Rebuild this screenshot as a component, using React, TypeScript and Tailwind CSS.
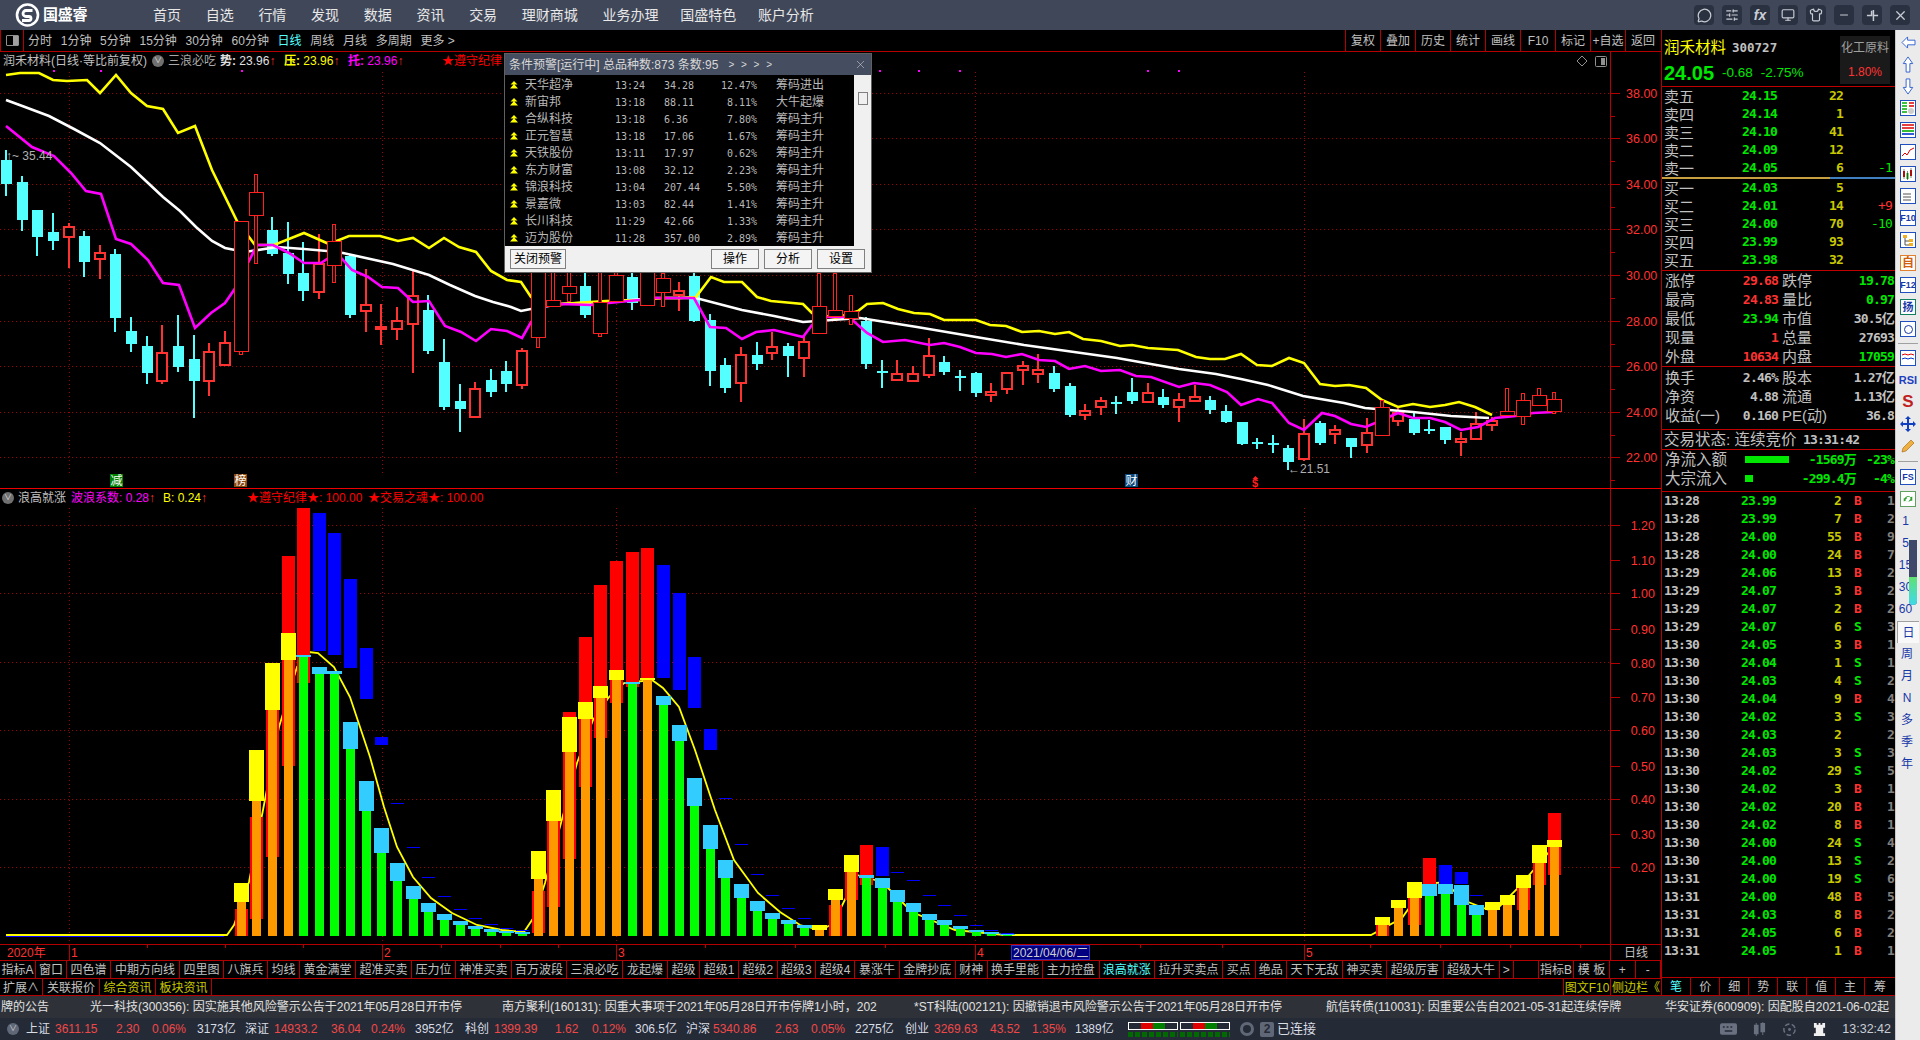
import { MessageCircle, Minus, Monitor, Shirt, SlidersHorizontal, X } from 'lucide-react'

const sans = "[font-family:'Liberation_Sans','Noto_Sans_CJK_SC',sans-serif]"
const mono = "[font-family:'DejaVu_Sans_Mono','Noto_Sans_CJK_SC',monospace]"
const digits = 'font-bold text-[13px] tracking-[-0.8px]'

const barX = (i: number) => Math.round(6 + 15.64 * i)

// wick top, wick bottom, body top, body bottom, type (c solid cyan, r hollow red, b wide thin red)
const candles: [number, number, number, number, string][] = [
    [150, 196, 160, 184, 'c'], [176, 231, 182, 220, 'c'], [210, 256, 210, 237, 'c'], [213, 250, 232, 241, 'c'],
    [223, 268, 227, 237, 'r'], [231, 277, 236, 262, 'c'], [245, 279, 253, 259, 'r'], [249, 332, 254, 318, 'c'],
    [317, 352, 331, 344, 'c'], [336, 384, 346, 373, 'c'], [325, 384, 353, 381, 'r'], [315, 372, 346, 367, 'c'],
    [335, 418, 359, 381, 'c'], [343, 396, 352, 381, 'r'], [331, 365, 343, 365, 'r'], [221, 354, 221, 351, 'b'],
    [174, 263, 192, 215, 'b'], [217, 256, 230, 254, 'c'], [222, 284, 253, 274, 'c'], [242, 301, 273, 291, 'c'],
    [234, 299, 264, 292, 'r'], [224, 282, 241, 265, 'b'], [255, 318, 256, 315, 'c'], [269, 332, 305, 311, 'r'],
    [304, 345, 327, 329, 'r'], [307, 340, 321, 329, 'r'], [271, 373, 296, 324, 'r'], [295, 354, 310, 351, 'c'],
    [339, 410, 362, 407, 'c'], [384, 432, 401, 409, 'c'], [382, 417, 389, 417, 'r'], [369, 397, 380, 392, 'c'],
    [361, 392, 371, 384, 'c'], [348, 389, 351, 385, 'r'], [230, 347, 235, 337, 'b'], [270, 306, 300, 306, 'b'],
    [272, 301, 286, 293, 'b'], [272, 318, 286, 315, 'c'], [272, 336, 302, 333, 'b'], [260, 301, 275, 301, 'b'],
    [270, 310, 277, 303, 'c'], [260, 305, 268, 305, 'b'], [273, 306, 278, 292, 'b'], [282, 311, 291, 295, 'r'],
    [268, 322, 276, 321, 'c'], [314, 386, 320, 371, 'c'], [358, 393, 365, 388, 'c'], [347, 402, 355, 383, 'r'],
    [342, 370, 355, 364, 'c'], [332, 360, 347, 353, 'r'], [343, 377, 346, 356, 'c'], [335, 377, 342, 358, 'r'],
    [273, 333, 306, 333, 'b'], [273, 316, 310, 316, 'b'], [295, 324, 311, 318, 'b'], [317, 369, 321, 364, 'c'],
    [360, 388, 371, 373, 'c'], [360, 380, 374, 380, 'r'], [366, 382, 374, 381, 'r'], [338, 378, 356, 375, 'r'],
    [356, 375, 362, 372, 'c'], [370, 391, 376, 378, 'c'], [372, 397, 373, 393, 'c'], [383, 402, 392, 395, 'r'],
    [373, 394, 373, 389, 'r'], [361, 385, 366, 370, 'r'], [354, 383, 370, 374, 'r'], [366, 392, 373, 389, 'c'],
    [383, 417, 386, 415, 'c'], [404, 420, 411, 415, 'r'], [397, 415, 401, 407, 'r'], [396, 414, 402, 404, 'c'],
    [378, 404, 392, 401, 'c'], [383, 403, 393, 402, 'r'], [389, 408, 397, 405, 'c'], [393, 422, 400, 407, 'r'],
    [385, 402, 397, 401, 'r'], [396, 414, 400, 410, 'c'], [405, 423, 411, 422, 'c'], [422, 445, 422, 444, 'c'],
    [438, 449, 442, 444, 'c'], [435, 453, 443, 445, 'c'], [445, 470, 448, 462, 'c'], [419, 461, 434, 459, 'r'],
    [421, 445, 423, 443, 'c'], [425, 444, 430, 434, 'r'], [438, 458, 438, 447, 'c'], [418, 453, 433, 445, 'r'],
    [400, 435, 407, 435, 'b'], [406, 426, 413, 421, 'r'], [413, 435, 419, 433, 'c'], [420, 434, 429, 431, 'c'],
    [427, 444, 427, 440, 'c'], [432, 456, 439, 442, 'r'], [412, 440, 424, 439, 'r'], [417, 431, 421, 425, 'r'],
    [388, 415, 411, 415, 'b'], [393, 424, 400, 416, 'b'], [388, 405, 395, 405, 'b'], [392, 413, 399, 411, 'b'],
]

const yellowLine = '6,75 20,73 39,73 53,80 67,81 87,80 100,93 116,75 131,93 147,106 163,109 178,133 195,126 212,170 237,221 255,245 274,245 304,233 329,244 349,236 380,236 398,241 413,238 429,248 444,238 459,247 476,252 491,271 507,280 521,282 531,297 546,304 560,304 590,302 606,301 640,300 663,298 680,298 696,297 711,277 724,282 742,282 757,297 771,301 803,304 812,313 836,318 858,311 867,304 883,303 898,309 914,313 930,314 944,320 976,320 990,325 1006,326 1022,332 1039,331 1055,334 1069,332 1083,339 1101,341 1120,346 1132,345 1148,348 1178,350 1196,357 1210,359 1225,359 1241,354 1257,365 1272,366 1289,358 1304,363 1320,384 1335,386 1349,385 1366,388 1382,400 1398,407 1413,404 1430,407 1445,405 1459,402 1475,407 1492,415'
const whiteLine = '6,100 25,107 49,116 74,129 100,143 131,167 147,182 163,197 180,211 196,227 212,241 225,248 245,252 277,247 304,249 327,251 343,253 393,264 429,275 450,285 475,296 493,302 511,307 521,311 531,309 560,304 620,301 655,298 696,298 742,310 774,316 803,322 860,318 917,327 976,337 1024,345 1117,358 1179,369 1216,374 1241,379 1268,385 1303,396 1344,403 1365,408 1413,412 1451,416 1489,418'
const magentaLine = '6,126 32,147 54,156 71,173 86,191 101,194 116,239 131,244 148,260 163,283 179,285 195,328 211,313 225,303 234,290 248,263 257,245 273,245 289,253 304,263 321,263 336,253 343,260 352,270 368,277 382,287 398,288 413,302 429,301 445,326 461,332 476,341 491,329 507,331 522,338 531,322 546,306 560,304 592,305 609,303 639,300 655,298 694,298 710,327 726,328 742,339 756,332 774,330 803,337 812,325 826,317 849,317 867,333 883,342 905,340 930,345 944,343 960,347 976,353 992,354 1006,357 1022,354 1039,360 1055,361 1069,369 1085,366 1101,371 1120,370 1136,376 1151,377 1179,387 1194,383 1210,385 1227,392 1241,405 1258,399 1272,403 1289,423 1304,430 1322,413 1335,416 1351,424 1366,427 1382,420 1398,413 1413,418 1430,418 1445,422 1461,430 1478,427 1495,418 1516,416 1533,413 1554,412'
const lowerLine = '6,935 227,935 234,925 249,882 263,810 279,727 297,667 309,652 318,653 334,667 350,697 370,757 384,807 397,847 413,877 431,898 452,913 477,925 502,930 524,932 534,917 545,883 561,823 577,763 593,720 609,697 624,683 652,680 663,688 679,707 695,750 715,810 734,860 758,893 780,912 800,925 820,930 833,924 857,875 882,882 912,912 955,930 1004,935 1371,935 1402,918 1426,884 1445,882 1463,900 1494,912 1518,888 1555,845'

type Bar = { i: number; top: number; cap: number; hi?: [number, number]; strip?: number; stripTop?: number; mark?: number }
const bars: Bar[] = [
    { i: 15, top: 902, cap: 883, strip: 936, stripTop: 909 },
    { i: 16, top: 801, cap: 750, strip: 919, stripTop: 817 },
    { i: 17, top: 710, cap: 663, strip: 857 },
    { i: 18, top: 660, cap: 633, hi: [556, 633], strip: 766 },
    { i: 19, top: 657, cap: 655, hi: [508, 655], strip: 683 },
    { i: 20, top: 674, cap: 667, hi: [513, 651] },
    { i: 21, top: 674, cap: 671, hi: [533, 655] },
    { i: 22, top: 749, cap: 722, hi: [579, 668] },
    { i: 23, top: 811, cap: 781, hi: [648, 699] },
    { i: 24, top: 853, cap: 828, hi: [737, 745] },
    { i: 25, top: 881, cap: 863, mark: 803 },
    { i: 26, top: 899, cap: 886, mark: 847 },
    { i: 27, top: 912, cap: 903, mark: 877 },
    { i: 28, top: 920, cap: 914, mark: 896 },
    { i: 29, top: 925, cap: 921, mark: 909 },
    { i: 30, top: 929, cap: 926, mark: 918 },
    { i: 31, top: 932, cap: 929, mark: 924 },
    { i: 32, top: 933, cap: 931, mark: 928 },
    { i: 33, top: 934, cap: 932, mark: 930 },
    { i: 34, top: 879, cap: 851, strip: 933, stripTop: 891 },
    { i: 35, top: 821, cap: 790, strip: 907 },
    { i: 36, top: 752, cap: 717, hi: [712, 717], strip: 859 },
    { i: 37, top: 719, cap: 702, hi: [637, 702], strip: 787 },
    { i: 38, top: 698, cap: 686, hi: [585, 686], strip: 738 },
    { i: 39, top: 680, cap: 670, hi: [561, 670], strip: 703 },
    { i: 40, top: 684, cap: 682, hi: [552, 682], strip: 687 },
    { i: 41, top: 680, cap: 678, hi: [548, 678] },
    { i: 42, top: 705, cap: 696, hi: [565, 678] },
    { i: 43, top: 741, cap: 725, hi: [593, 690] },
    { i: 44, top: 806, cap: 778, hi: [657, 708] },
    { i: 45, top: 849, cap: 825, hi: [729, 750] },
    { i: 46, top: 878, cap: 860, mark: 798 },
    { i: 47, top: 898, cap: 884, mark: 844 },
    { i: 48, top: 911, cap: 901, mark: 874 },
    { i: 49, top: 919, cap: 913, mark: 895 },
    { i: 50, top: 924, cap: 920, mark: 908 },
    { i: 51, top: 928, cap: 925, mark: 918 },
    { i: 52, top: 930, cap: 925 },
    { i: 53, top: 900, cap: 889, strip: 936, stripTop: 905 },
    { i: 54, top: 872, cap: 855, strip: 900 },
    { i: 55, top: 878, cap: 875, hi: [845, 875], strip: 885 },
    { i: 56, top: 888, cap: 878, hi: [847, 876] },
    { i: 57, top: 902, cap: 890, mark: 872 },
    { i: 58, top: 912, cap: 903, mark: 880 },
    { i: 59, top: 920, cap: 914, mark: 895 },
    { i: 60, top: 925, cap: 920, mark: 905 },
    { i: 61, top: 929, cap: 926, mark: 915 },
    { i: 62, top: 932, cap: 930, mark: 925 },
    { i: 63, top: 934, cap: 932, mark: 930 },
    { i: 64, top: 935, cap: 934, mark: 933 },
    { i: 88, top: 925, cap: 917, strip: 936 },
    { i: 89, top: 908, cap: 900 },
    { i: 90, top: 898, cap: 882, strip: 925 },
    { i: 91, top: 896, cap: 884, hi: [858, 884] },
    { i: 92, top: 894, cap: 884, hi: [865, 884] },
    { i: 93, top: 905, cap: 885, hi: [872, 884] },
    { i: 94, top: 915, cap: 905, mark: 895 },
    { i: 95, top: 910, cap: 902 },
    { i: 96, top: 905, cap: 895 },
    { i: 97, top: 888, cap: 875, strip: 910 },
    { i: 98, top: 863, cap: 845, strip: 885 },
    { i: 99, top: 847, cap: 840, hi: [813, 840], strip: 875 },
]
const greenBars = [19, 20, 21, 22, 23, 24, 25, 26, 27, 28, 29, 30, 31, 32, 33, 40, 42, 43, 44, 45, 46, 47, 48, 49, 50, 51, 55, 56, 57, 58, 59, 60, 61, 62, 63, 64, 91, 92, 93, 94]
const blueTop = [20, 21, 22, 23, 24, 42, 43, 44, 45, 56, 92, 93]

const gridXs = [69, 382, 616, 975, 1304]
const mainPrices = ['38.00', '36.00', '34.00', '32.00', '30.00', '28.00', '26.00', '24.00', '22.00']
const lowerPrices: [string, number][] = [
    ['1.20', 525], ['1.10', 560], ['1.00', 593], ['0.90', 629], ['0.80', 663], ['0.70', 697],
    ['0.60', 730], ['0.50', 766], ['0.40', 799], ['0.30', 834], ['0.20', 867],
]

const navItems = ['首页', '自选', '行情', '发现', '数据', '资讯', '交易', '理财商城', '业务办理', '国盛特色', '账户分析']
const periods = ['1分钟', '5分钟', '15分钟', '30分钟', '60分钟']
const tools = ['复权', '叠加', '历史', '统计', '画线', 'F10', '标记', '+自选', '返回']

const tabs1: [string, string, string?][] = [
    ['指标A', 'w-[36px]'], ['窗口', 'w-[31px]'], ['四色谱', 'w-[44px]'], ['中期方向线', 'w-[69px]'], ['四里图', 'w-[44px]'],
    ['八旗兵', 'w-[44px]'], ['均线', 'w-[32px]'], ['黄金满堂', 'w-[56px]'], ['超准买卖', 'w-[56px]'], ['压力位', 'w-[44px]'],
    ['神准买卖', 'w-[56px]'], ['百万波段', 'w-[55px]'], ['三浪必吃', 'w-[56px]'], ['龙起爆', 'w-[45px]'], ['超级', 'w-[32px]'],
    ['超级1', 'w-[39px]'], ['超级2', 'w-[38.5px]'], ['超级3', 'w-[38.5px]'], ['超级4', 'w-[39px]'], ['暴涨牛', 'w-[45px]'],
    ['金牌抄底', 'w-[55.5px]'], ['财神', 'w-[32.5px]'], ['换手里能', 'w-[55px]'], ['主力控盘', 'w-[56.5px]'],
    ['浪高就涨', 'w-[55.5px]', 'text-[#54ffff]'], ['拉升买卖点', 'w-[68px]'], ['买点', 'w-[32.5px]'], ['绝品', 'w-[31.5px]'],
    ['天下无敌', 'w-[56px]'], ['神买卖', 'w-[44px]'], ['超级厉害', 'w-[56.5px]'], ['超级大牛', 'w-[56px]'], ['>', 'w-[14.5px]'],
    ['', 'w-[25px]'], ['指标B', 'w-[35px]'], ['模 板', 'w-[36px]'], ['+', 'w-[25.5px]'], ['-', 'w-[25.5px]'],
]
const tabs2: [string, string, string?][] = [
    ['扩展∧', 'w-[43px]'], ['关联报价', 'w-[57px]'], ['综合资讯', 'w-[56px]', 'text-[#c8c800]'], ['板块资讯', 'w-[56px]', 'text-[#c8c800]'],
]

const askRows = [['卖五', '24.15', '22', ''], ['卖四', '24.14', '1', ''], ['卖三', '24.10', '41', ''], ['卖二', '24.09', '12', ''], ['卖一', '24.05', '6', '-1']]
const bidRows = [['买一', '24.03', '5', ''], ['买二', '24.01', '14', '+9'], ['买三', '24.00', '70', '-10'], ['买四', '23.99', '93', ''], ['买五', '23.98', '32', '']]

const G = 'text-[#00e800]'
const R = 'text-[#ff3232]'
const W = 'text-[#c0c0c0]'
const stats1 = [
    ['涨停', '29.68', R, '跌停', '19.78', G], ['最高', '24.83', R, '量比', '0.97', G], ['最低', '23.94', G, '市值', '30.5亿', W],
    ['现量', '1', R, '总量', '27693', W], ['外盘', '10634', R, '内盘', '17059', G],
]
const stats2 = [['换手', '2.46%', W, '股本', '1.27亿', W], ['净资', '4.88', W, '流通', '1.13亿', W], ['收益(一)', '0.160', W, 'PE(动)', '36.8', W]]

const trades = [
    ['13:28', '23.99', '2', 'B', '1'], ['13:28', '23.99', '7', 'B', '2'], ['13:28', '24.00', '55', 'B', '9'], ['13:28', '24.00', '24', 'B', '7'],
    ['13:29', '24.06', '13', 'B', '2'], ['13:29', '24.07', '3', 'B', '2'], ['13:29', '24.07', '2', 'B', '2'], ['13:29', '24.07', '6', 'S', '3'],
    ['13:30', '24.05', '3', 'B', '1'], ['13:30', '24.04', '1', 'S', '1'], ['13:30', '24.03', '4', 'S', '2'], ['13:30', '24.04', '9', 'B', '4'],
    ['13:30', '24.02', '3', 'S', '3'], ['13:30', '24.03', '2', '', '2'], ['13:30', '24.03', '3', 'S', '3'], ['13:30', '24.02', '29', 'S', '5'],
    ['13:30', '24.02', '3', 'B', '1'], ['13:30', '24.02', '20', 'B', '1'], ['13:30', '24.02', '8', 'B', '1'], ['13:30', '24.00', '24', 'S', '4'],
    ['13:30', '24.00', '13', 'S', '2'], ['13:31', '24.00', '19', 'S', '6'], ['13:31', '24.00', '48', 'B', '5'], ['13:31', '24.03', '8', 'B', '2'],
    ['13:31', '24.05', '6', 'B', '2'], ['13:31', '24.05', '1', 'B', '1'],
]

const panelTabs: [string, string][] = [['笔', 'w-[28px]'], ['价', 'w-[29.5px]'], ['细', 'w-[29px]'], ['势', 'w-[29px]'], ['联', 'w-[29px]'], ['值', 'w-[29px]'], ['主', 'w-[29px]'], ['筹', 'w-[31px]']]

const alerts = [
    ['天华超净', '13:24', '34.28', '12.47%', '筹码进出'], ['新宙邦', '13:18', '88.11', '8.11%', '大牛起爆'], ['合纵科技', '13:18', '6.36', '7.80%', '筹码主升'],
    ['正元智慧', '13:18', '17.06', '1.67%', '筹码主升'], ['天铁股份', '13:11', '17.97', '0.62%', '筹码主升'], ['东方财富', '13:08', '32.12', '2.23%', '筹码主升'],
    ['锦浪科技', '13:04', '207.44', '5.50%', '筹码主升'], ['景嘉微', '13:03', '82.44', '1.41%', '筹码主升'], ['长川科技', '11:29', '42.66', '1.33%', '筹码主升'],
    ['迈为股份', '11:28', '357.00', '2.89%', '筹码主升'],
]

const tickers: [string, string][] = [
    ['牌的公告', 'w-[89px]'],
    ['光一科技(300356): 因实施其他风险警示公告于2021年05月28日开市停', 'w-[412px]'],
    ['南方聚利(160131): 因重大事项于2021年05月28日开市停牌1小时，202', 'w-[412px]'],
    ['*ST科陆(002121): 因撤销退市风险警示公告于2021年05月28日开市停', 'w-[412px]'],
    ['航信转债(110031): 因重要公告自2021-05-31起连续停牌', 'w-[339px]'],
    ['华安证券(600909): 因配股自2021-06-02起', 'w-[231px]'],
]

const W2 = 'text-[#d8dce4]'
const R2 = 'text-[#f04848]'
const indexCells: [string, string, string][] = [
    ['上证', W2, 'w-[29px]'], ['3611.15', R2, 'w-[61px]'], ['2.30', R2, 'w-[36px]'], ['0.06%', R2, 'w-[45px]'], ['3173亿', W2, 'w-[48px]'],
    ['深证', W2, 'w-[29px]'], ['14933.2', R2, 'w-[57px]'], ['36.04', R2, 'w-[40px]'], ['0.24%', R2, 'w-[44px]'], ['3952亿', W2, 'w-[50px]'],
    ['科创', W2, 'w-[29px]'], ['1399.39', R2, 'w-[61px]'], ['1.62', R2, 'w-[37px]'], ['0.12%', R2, 'w-[43px]'], ['306.5亿', W2, 'w-[51px]'],
    ['沪深', W2, 'w-[27px]'], ['5340.86', R2, 'w-[62px]'], ['2.63', R2, 'w-[36px]'], ['0.05%', R2, 'w-[44px]'], ['2275亿', W2, 'w-[50px]'],
    ['创业', W2, 'w-[29px]'], ['3269.63', R2, 'w-[56px]'], ['43.52', R2, 'w-[42px]'], ['1.35%', R2, 'w-[43px]'], ['1389亿', W2, 'w-[53px]'],
]

function MainChart() {
    return (
        <svg viewBox="0 52 1661 436" className={`block w-[1661px] h-[436px] ${sans}`}>
            {mainPrices.map((p, k) => {
                const y = Math.round(92.5 + k * 45.6) + 0.5
                return (
                    <g key={p}>
                        <line x1={0} x2={1610} y1={y} y2={y} stroke="#a00000" strokeDasharray="1 3" />
                        <line x1={1610} x2={1620} y1={y} y2={y} stroke="#b40000" />
                        <line x1={1610} x2={1615} y1={y + 23} y2={y + 23} stroke="#b40000" />
                        <text x={1626} y={y + 4.5} fill="#ff3232" fontSize={12.5}>{p}</text>
                    </g>
                )
            })}
            {gridXs.map((x) => (
                <line key={x} x1={x + 0.5} x2={x + 0.5} y1={72} y2={473} stroke="#a00000" strokeDasharray="1 3" />
            ))}
            <line x1={1610.5} x2={1610.5} y1={52} y2={488} stroke="#b40000" />

            <g shapeRendering="crispEdges">
                {candles.map(([wt, wb, bt, bb, type], i) => {
                    const x = barX(i)
                    if (type === 'c') {
                        return (
                            <g key={i} fill="#54ffff">
                                <rect x={x - 1} y={wt} width={2} height={wb - wt} />
                                <rect x={x - 5} y={bt} width={11} height={bb - bt} />
                            </g>
                        )
                    }
                    if (type === 'r') {
                        return (
                            <g key={i}>
                                <rect x={x - 1} y={wt} width={2} height={wb - wt} fill="#ff3232" />
                                <rect x={x - 5} y={bt} width={10} height={bb - bt} fill="#000" stroke="#ff3232" strokeWidth={2} />
                            </g>
                        )
                    }
                    return null
                })}
            </g>
            <polyline points={whiteLine} fill="none" stroke="#fff" strokeWidth={2.6} />
            <polyline points={yellowLine} fill="none" stroke="#ff0" strokeWidth={2.6} />
            <polyline points={magentaLine} fill="none" stroke="#f0f" strokeWidth={2.6} />
            <g shapeRendering="crispEdges">
                {candles.map(([wt, wb, bt, bb, type], i) => {
                    if (type !== 'b') return null
                    const x = barX(i)
                    return (
                        <g key={i} fill="#000" stroke="#ff2020">
                            <rect x={x - 1.5} y={wt} width={3} height={wb - wt} />
                            <rect x={x - 7} y={bt} width={14} height={bb - bt} />
                        </g>
                    )
                })}
            </g>

            {[53, 100, 241, 860, 879, 918, 959, 1147, 1178].map((x) => (
                <rect key={x} x={x} y={70} width={2} height={2} fill="#f0f" />
            ))}
            <text x={6} y={160} fill="#b0b0b0" fontSize={12}>↑~ 35.44</text>
            <text x={1288} y={473} fill="#b0b0b0" fontSize={12}>←21.51</text>

            <rect x={110} y={474} width={13} height={13} fill="#008000" />
            <text x={110.5} y={485} fill="#fff" fontSize={12}>减</text>
            <rect x={234} y={474} width={13} height={13} fill="#8a4a10" />
            <text x={234.5} y={485} fill="#fff" fontSize={12}>榜</text>
            <rect x={1125} y={474} width={13} height={13} fill="#0a4a80" />
            <text x={1125.5} y={485} fill="#fff" fontSize={12}>财</text>
            <text x={1252} y={487} fill="#ff2020" fontSize={11} fontWeight={700}>$</text>
            <path d="M1255.5 476l3 3h-6z" fill="#ff2020" />

            <path d="M1582 56l5 5-5 5-5-5z" fill="none" stroke="#909090" />
            <rect x={1595.5} y={56.5} width={11} height={10} rx={1} fill="none" stroke="#909090" />
            <rect x={1601} y={58} width={4} height={7} fill="#909090" />
        </svg>
    )
}

function LowerChart() {
    return (
        <svg viewBox="0 489 1661 455" className={`block w-[1661px] h-[455px] ${sans}`}>
            {[525, 593, 662, 730, 799, 867].map((y) => (
                <line key={y} x1={0} x2={1610} y1={y + 0.5} y2={y + 0.5} stroke="#a00000" strokeDasharray="1 3" />
            ))}
            {gridXs.map((x) => (
                <line key={x} x1={x + 0.5} x2={x + 0.5} y1={508} y2={944} stroke="#a00000" strokeDasharray="1 3" />
            ))}
            <line x1={1610.5} x2={1610.5} y1={489} y2={944} stroke="#b40000" />
            {lowerPrices.map(([p, y]) => (
                <g key={p}>
                    <line x1={1610} x2={1620} y1={y + 0.5} y2={y + 0.5} stroke="#b40000" />
                    <text x={1655} y={y + 4.5} fill="#ff3232" fontSize={12.5} textAnchor="end">{p}</text>
                </g>
            ))}
            <polyline points={lowerLine} fill="none" stroke="#ff0" strokeWidth={1.8} />
            <g shapeRendering="crispEdges">
                {bars.map((b) => {
                    const x = barX(b.i)
                    const green = greenBars.includes(b.i)
                    const blue = blueTop.includes(b.i)
                    return (
                        <g key={b.i}>
                            {b.strip && <rect x={x - 6} y={b.stripTop ?? b.top} width={13} height={b.strip - (b.stripTop ?? b.top)} fill="#f00" />}
                            <rect x={x - 4} y={b.top} width={9} height={936 - b.top} fill={green ? '#0f0' : '#f90'} />
                            <rect x={x - 7} y={b.cap} width={15} height={b.top - b.cap} fill={green ? '#3cf' : '#ff0'} />
                            {b.hi && <rect x={x - 6} y={b.hi[0]} width={13} height={b.hi[1] - b.hi[0]} fill={blue ? '#00f' : '#f00'} />}
                            {b.mark && <rect x={x - 6} y={b.mark} width={13} height={1} fill="#00f" />}
                        </g>
                    )
                })}
            </g>
            <line x1={6} x2={224} y1={936.5} y2={936.5} stroke="#00f" strokeWidth={1} />
        </svg>
    )
}

function TimeAxis() {
    const short = [147, 225, 303, 441, 500, 558, 705, 795, 885, 1055, 1140, 1222, 1370, 1440, 1510, 1580]
    return (
        <svg viewBox="0 0 1610 15" className={`block w-[1610px] h-[15px] ${sans}`}>
            {short.map((x) => <line key={x} x1={x + 0.5} x2={x + 0.5} y1={0} y2={3} stroke="#b40000" />)}
            {gridXs.map((x) => <line key={x} x1={x + 0.5} x2={x + 0.5} y1={0} y2={15} stroke="#b40000" />)}
            <text x={7} y={12} fill="#ff3232" fontSize={12}>2020年</text>
            {gridXs.map((x, i) => <text key={x} x={x + 2} y={12} fill="#ff3232" fontSize={12}>{i + 1}</text>)}
            <rect x={1011.5} y={0.5} width={78} height={14} fill="#000080" stroke="#3030c0" />
            <text x={1013} y={12} fill="#d0d0d0" fontSize={12}>2021/04/06/二</text>
        </svg>
    )
}

function Logo() {
    return (
        <div className="flex items-center gap-[3px] pl-[15px] w-[153px] shrink-0">
            <svg viewBox="0 0 24 24" className="w-[25px] h-[24px]">
                <circle cx="12" cy="12" r="10.5" fill="none" stroke="#fff" strokeWidth="2.6" />
                <path d="M17 7.5H10.5a3 3 0 0 0 0 6h3a2 2 0 0 1 0 4H6.5" fill="none" stroke="#fff" strokeWidth="2.8" />
            </svg>
            <span className="text-[15px] font-bold text-white tracking-[-0.3px]">国盛睿</span>
        </div>
    )
}

function WinButton({ children }: { children: React.ReactNode }) {
    return <div className="w-[20px] h-[20px] flex items-center justify-center rounded-[4px] bg-[#2a3140] text-[#c8ccd4]">{children}</div>
}

function TopBar() {
    return (
        <div className="h-[30px] flex items-center bg-[#3f4759] shrink-0">
            <Logo />
            <div className="flex gap-[24.7px] text-[14px] text-[#e8e8e8]">
                {navItems.map((n, i) => <span key={n} className={i > 8 ? '-ml-[3px]' : ''}>{n}</span>)}
            </div>
            <div className="ml-auto mr-[10px] flex gap-[8px]">
                <WinButton><MessageCircle size={15} /></WinButton>
                <WinButton><SlidersHorizontal size={14} /></WinButton>
                <WinButton><span className="text-[14px] font-bold italic leading-none">fx</span></WinButton>
                <WinButton><Monitor size={14} /></WinButton>
                <WinButton><Shirt size={14} /></WinButton>
                <WinButton><Minus size={12} /></WinButton>
                <WinButton>
                    <svg viewBox="0 0 14 14" className="w-[13px] h-[13px]"><path d="M1 7h5V2M8 1v12M8 7h5" fill="none" stroke="currentColor" strokeWidth="1.6" /></svg>
                </WinButton>
                <WinButton><X size={15} /></WinButton>
            </div>
        </div>
    )
}

function Toolbar() {
    return (
        <div className="h-[22px] shrink-0 flex items-center border-b border-[#b40000] text-[12px] text-[#c0c0c0]">
            <div className="w-[24px] h-full border-x border-[#b40000] flex items-center justify-center shrink-0">
                <div className="w-[13px] h-[11px] border border-[#909090] rounded-[1px] flex justify-end"><div className="w-[5px] bg-[#a0a0a0]" /></div>
            </div>
            <div className="flex gap-[8.7px] pl-[4px] items-center">
                <span>分时</span>
                {periods.map((p) => <span key={p}>{p}</span>)}
                <span className="text-[#54ffff]">日线</span>
                <span>周线</span>
                <span>月线</span>
                <span>多周期</span>
                <span>更多 &gt;</span>
            </div>
            <div className="ml-auto flex h-full pr-[1px]">
                {tools.map((t) => (
                    <div key={t} className="w-[35px] h-full border-l border-[#b40000] flex items-center justify-center">{t}</div>
                ))}
            </div>
        </div>
    )
}

function ChartHeader() {
    return (
        <div className="absolute left-0 top-0 h-[18px] flex items-center text-[12px] whitespace-nowrap text-[#c0c0c0]">
            <span className="ml-[3px] w-[149px]">润禾材料(日线·等比前复权)</span>
            <span className="w-[12px] h-[12px] rounded-full bg-[#707070] text-[8px] flex items-center justify-center text-[#ddd] leading-none">∨</span>
            <span className="ml-[4px] w-[52px] text-[#a8a8a8]">三浪必吃</span>
            <span className="font-bold text-[#e0e0e0] w-[64px]">势: <span className="font-normal">23.96</span><span className="text-[#ff3232]">↑</span></span>
            <span className="text-[#ffff00] w-[64px]"><b>压:</b> 23.96<span className="text-[#ff3232]">↑</span></span>
            <span className="text-[#ff00ff] w-[94px]"><b>托:</b> 23.96<span className="text-[#ff3232]">↑</span></span>
            <span className="text-[#ff0000]">★遵守纪律</span>
        </div>
    )
}

function LowerHeader() {
    return (
        <div className="absolute left-0 top-0 h-[17px] flex items-center text-[12px] whitespace-nowrap">
            <span className="ml-[2px] w-[12px] h-[12px] rounded-full bg-[#707070] text-[8px] flex items-center justify-center text-[#ddd] leading-none">∨</span>
            <span className="ml-[4px] w-[53px] text-[#c0c0c0]">浪高就涨</span>
            <span className="w-[92px] text-[#ff00ff]">波浪系数: 0.28<span className="text-[#ff3232]">↑</span></span>
            <span className="w-[84px] text-[#ffff00]">B: 0.24<span className="text-[#ff3232]">↑</span></span>
            <span className="w-[121px] text-[#ff0000]">★遵守纪律★: 100.00</span>
            <span className="text-[#ff0000]">★交易之魂★: 100.00</span>
        </div>
    )
}

function AlertPopup() {
    return (
        <div className="absolute left-[504px] top-[1px] w-[368px] h-[220px] flex flex-col bg-[#f0f0f0] border border-[#606060] text-[12px]">
            <div className="h-[21px] shrink-0 flex items-center bg-[#454e60] text-[#d8d8d8] pl-[4px] whitespace-pre">
                <span>条件预警[运行中] 总品种数:873 条数:95</span>
                <span className="ml-[10px] tracking-[2px] text-[10px]">&gt; &gt; &gt; &gt;</span>
                <X size={13} strokeWidth={1} className="ml-auto mr-[4px]" />
            </div>
            <div className="h-[171px] flex">
                <div className="w-[349px] pt-[1.5px] bg-black overflow-hidden">
                    {alerts.map(([name, time, price, pct, label]) => (
                        <div key={name} className="h-[17px] flex items-center text-[#b8b8b8]">
                            <svg viewBox="0 0 8 8" className="ml-[5px] w-[8px] h-[8px] shrink-0"><path d="M4 0l3.5 3.5h-7zM4 3l4 4.5H0z" fill="#ff0" /></svg>
                            <span className="ml-[7px] w-[90px]">{name}</span>
                            <span className={`${mono} text-[10px] w-[49px]`}>{time}</span>
                            <span className={`${mono} text-[10px] w-[53px]`}>{price}</span>
                            <span className={`${mono} text-[10px] w-[40px] text-right`}>{pct}</span>
                            <span className="ml-[19px]">{label}</span>
                        </div>
                    ))}
                </div>
                <div className="flex-1 pt-[17px] flex justify-center">
                    <div className="w-[10px] h-[13px] border border-[#808080]" />
                </div>
            </div>
            <div className="flex-1 flex items-center pl-[5px] gap-[5px] text-black">
                <div className="w-[56px] h-[20px] border border-[#808080] bg-[#f4f4f4] flex items-center justify-center mr-[140px]">关闭预警</div>
                <div className="w-[48px] h-[20px] border border-[#808080] bg-[#f4f4f4] flex items-center justify-center">操作</div>
                <div className="w-[48px] h-[20px] border border-[#808080] bg-[#f4f4f4] flex items-center justify-center">分析</div>
                <div className="w-[48px] h-[20px] border border-[#808080] bg-[#f4f4f4] flex items-center justify-center">设置</div>
            </div>
        </div>
    )
}

function TabRow({ items, children }: { items: [string, string, string?][]; children?: React.ReactNode }) {
    return (
        <div className="h-[18px] shrink-0 flex border-t border-[#b40000] text-[12px] text-[#c0c0c0] whitespace-nowrap">
            {items.map(([t, w, c], i) => (
                <div key={i} className={`${w} ${c ?? ''} shrink-0 h-full border-r border-[#b40000] flex items-center justify-center overflow-hidden`}>{t}</div>
            ))}
            {children}
        </div>
    )
}

function LeftColumn() {
    return (
        <div className="w-[1662px] shrink-0 flex flex-col border-r border-[#b40000]">
            <Toolbar />
            <div className="relative h-[437px] shrink-0 border-b border-[#ee0000]">
                <MainChart />
                <ChartHeader />
                <AlertPopup />
            </div>
            <div className="relative h-[455px] shrink-0">
                <LowerChart />
                <LowerHeader />
            </div>
            <div className="h-[15px] shrink-0 flex border-t border-[#b40000] box-content">
                <TimeAxis />
                <div className="flex-1 border-l border-[#b40000] -mb-[1px] flex items-center justify-center text-[12px] text-[#c0c0c0]">日线</div>
            </div>
            <TabRow items={tabs1} />
            <TabRow items={tabs2}>
                <div className="ml-auto w-[47px] border-l border-[#b40000] text-[#c8c800] flex items-center justify-center">图文F10</div>
                <div className="w-[51px] border-l border-[#b40000] text-[#c8c800] flex items-center justify-center">侧边栏《</div>
            </TabRow>
        </div>
    )
}

function QuoteRow({ row }: { row: string[] }) {
    return (
        <div className="h-[18px] flex items-center pl-[2px]">
            <span className="w-[78px] text-[15px] text-[#c0c0c0] leading-none">{row[0]}</span>
            <span className={`w-[60px] ${mono} ${digits} ${G}`}>{row[1]}</span>
            <span className={`w-[41px] text-right ${mono} ${digits} text-[#c8c800]`}>{row[2]}</span>
            <span className={`flex-1 text-right pr-[3px] ${mono} text-[13px] tracking-[-0.8px] ${row[3].startsWith('+') ? R : G}`}>{row[3]}</span>
        </div>
    )
}

function StatRow({ row }: { row: string[] }) {
    return (
        <div className="h-[19px] flex items-center pl-[3px] pr-[1px] text-[#c0c0c0]">
            <span className="text-[15px] leading-none w-[65px] whitespace-nowrap">{row[0]}</span>
            <span className={`w-[48px] text-right ${mono} ${digits} whitespace-nowrap ${row[2]}`}>{row[1]}</span>
            <span className="ml-[4px] text-[15px] leading-none w-[60px] whitespace-nowrap">{row[3]}</span>
            <span className={`flex-1 text-right ${mono} ${digits} whitespace-nowrap ${row[5]}`}>{row[4]}</span>
        </div>
    )
}

function FlowRow({ label, barClass, amount, pct }: { label: string; barClass: string; amount: string; pct: string }) {
    return (
        <div className="h-[19px] flex items-center pl-[3px] pr-[1px]">
            <span className="w-[80px] text-[15.5px] leading-none text-[#c0c0c0]">{label}</span>
            <div className="w-[44px]"><div className={`h-[7px] bg-[#00e800] ${barClass}`} /></div>
            <span className={`w-[67px] text-right ${mono} ${digits} ${G} whitespace-nowrap`}>{amount}</span>
            <span className={`flex-1 text-right ${mono} ${digits} ${G}`}>{pct}</span>
        </div>
    )
}

function RightPanel() {
    return (
        <div className="w-[233px] shrink-0 flex flex-col">
            <div className="h-[57px] shrink-0 border-b border-[#c00000] flex">
                <div className="w-[178px] pl-[2px]">
                    <div className="h-[29px] flex items-end gap-[6px]">
                        <span className="text-[15.5px] text-[#ffff00] leading-[22px]">润禾材料</span>
                        <span className={`${mono} font-bold text-[12.5px] text-[#c0c0c0] leading-[22px]`}>300727</span>
                    </div>
                    <div className={`flex items-center gap-[8px] h-[28px] ${G} ${sans} font-bold`}>
                        <span className="text-[20px] w-[50px]">24.05</span>
                        <span className="text-[13.5px] font-normal">-0.68</span>
                        <span className="text-[13.5px] font-normal">-2.75%</span>
                    </div>
                </div>
                <div className="mt-[6px] w-[50px] h-[48px] bg-[#1a1a1a] flex flex-col items-center">
                    <span className="text-[12px] text-[#a0a0a0] leading-[24px]">化工原料</span>
                    <span className={`text-[12px] ${R} leading-[24px] ${sans}`}>1.80%</span>
                </div>
            </div>
            {askRows.map((r) => <QuoteRow key={r[0]} row={r} />)}
            <div className="h-[2px] shrink-0 flex"><div className="w-[168px] bg-[#c8a040]" /><div className="flex-1 bg-[#4080c0]" /></div>
            {bidRows.map((r) => <QuoteRow key={r[0]} row={r} />)}
            <div className="h-[1px] mt-[1px] shrink-0 bg-[#c00000]" />
            {stats1.map((r) => <StatRow key={r[0]} row={r} />)}
            <div className="h-[1px] shrink-0 mb-[1px] bg-[#c00000]" />
            {stats2.map((r) => <StatRow key={r[0]} row={r} />)}
            <div className="h-[1px] mt-[4px] shrink-0 bg-[#c00000]" />
            <div className="h-[19px] shrink-0 flex items-center pl-[2px] text-[#c0c0c0] whitespace-nowrap">
                <span className="text-[15.5px] leading-none w-[139px]">交易状态: 连续竞价</span>
                <span className={`${mono} ${digits}`}>13:31:42</span>
            </div>
            <div className="h-[1px] shrink-0 bg-[#c00000]" />
            <FlowRow label="净流入额" barClass="w-[44px]" amount="-1569万" pct="-23%" />
            <FlowRow label="大宗流入" barClass="w-[8px]" amount="-299.4万" pct="-4%" />
            <div className="h-[1px] mt-[3px] shrink-0 bg-[#c00000]" />
            <div className="flex-1">
                {trades.map((t, i) => (
                    <div key={i} className={`h-[18px] flex items-center pl-[2px] ${mono} ${digits}`}>
                        <span className="w-[77px] text-[#c0c0c0]">{t[0]}</span>
                        <span className={`w-[50px] ${G}`}>{t[1]}</span>
                        <span className="w-[50px] text-right text-[#c8c800]">{t[2]}</span>
                        <span className={`w-[36px] pl-[13px] ${t[3] === 'B' ? R : G}`}>{t[3]}</span>
                        <span className="flex-1 text-right pr-[1px] text-[#808080]">{t[4]}</span>
                    </div>
                ))}
            </div>
            <div className="h-[18px] shrink-0 flex border-t border-[#b40000] text-[12px] text-[#c0c0c0]">
                {panelTabs.map(([t, w], i) => (
                    <div key={t} className={`${w} h-full flex items-center justify-center ${i === 0 ? 'text-[#54ffff]' : 'border-l border-[#b40000]'}`}>{t}</div>
                ))}
            </div>
        </div>
    )
}

function BoxIcon({ children, border = 'border-[#2050c0]', text = 'text-[#1838a8]' }: { children?: React.ReactNode; border?: string; text?: string }) {
    return <div className={`w-[16px] h-[16px] border ${border} ${text} bg-white flex items-center justify-center text-[9px] font-bold leading-none overflow-hidden`}>{children}</div>
}

function SideStrip() {
    const slot = 'h-[22px] flex items-center justify-center shrink-0'
    return (
        <div className={`relative w-[25px] shrink-0 bg-[#ebebeb] border-l border-[#c8c8c8] flex flex-col items-center pt-[1px] text-[#1838a8] ${sans}`}>
            <div className={slot}><svg viewBox="0 0 16 14" className="w-[15px] h-[13px]"><path d="M1 7l6-6v3.5h8v5H7V13z" fill="#fff" stroke="#3060d0" /></svg></div>
            <div className={slot}><svg viewBox="0 0 12 18" className="w-[12px] h-[17px]"><path d="M6 1l5 7H8v9H4V8H1z" fill="#fff" stroke="#3060d0" /></svg></div>
            <div className={slot}><svg viewBox="0 0 12 18" className="w-[12px] h-[17px]"><path d="M6 17l5-7H8V1H4v9H1z" fill="#fff" stroke="#3060d0" /></svg></div>
            <div className={slot}>
                <BoxIcon>
                    <svg viewBox="0 0 14 14" className="w-[14px] h-[14px]"><path d="M1 2h5M1 5h5M1 8h5M1 11h5" stroke="#0a0" strokeWidth="1.6" /><path d="M8 2h5M8 5h5" stroke="#d00" strokeWidth="1.6" /><circle cx="10" cy="10" r="3" fill="#ccc" /></svg>
                </BoxIcon>
            </div>
            <div className={slot}>
                <BoxIcon>
                    <svg viewBox="0 0 14 14" className="w-[14px] h-[14px]"><path d="M1 2h12M1 5h12" stroke="#d00" strokeWidth="1.6" /><path d="M1 8h12" stroke="#0a0" strokeWidth="1.6" /><path d="M1 11h12" stroke="#03c" strokeWidth="1.6" /></svg>
                </BoxIcon>
            </div>
            <div className={slot}>
                <BoxIcon><svg viewBox="0 0 14 14" className="w-[14px] h-[14px]"><path d="M1 11l3-3 2 2 3-5 4-2" fill="none" stroke="#d00" /></svg></BoxIcon>
            </div>
            <div className={slot}>
                <BoxIcon>
                    <svg viewBox="0 0 14 14" className="w-[14px] h-[14px]"><path d="M2 4h2v6H2zM9 3h2v6H9z" fill="#d00" /><path d="M5.5 6h2v6h-2z" fill="#0a0" /><path d="M3 2v10M6.5 4v9M10 1v10" stroke="#333" strokeWidth=".6" /></svg>
                </BoxIcon>
            </div>
            <div className={slot}><BoxIcon><svg viewBox="0 0 14 14" className="w-[14px] h-[14px]"><path d="M2 5h8M2 8h8M2 11h8" stroke="#555" /></svg></BoxIcon></div>
            <div className={slot}><BoxIcon>F10</BoxIcon></div>
            <div className={slot}><BoxIcon><svg viewBox="0 0 14 14" className="w-[14px] h-[14px]"><path d="M2 2h4v3H2zM8 6h4v3H8zM8 10h4v3H8z" fill="#f0b020" /><path d="M4 5v7h4M4 8h4" fill="none" stroke="#555" /></svg></BoxIcon></div>
            <div className="h-[23px] flex items-center justify-center shrink-0"><BoxIcon border="border-[#e08030]" text="text-[#d06010]"><span className="text-[12px]">自</span></BoxIcon></div>
            <div className={slot}><BoxIcon>F12</BoxIcon></div>
            <div className={slot}><BoxIcon border="border-[#108060]" text="text-[#1838a8]"><span className="text-[11px]">扬</span></BoxIcon></div>
            <div className={slot}><BoxIcon><div className="w-[9px] h-[9px] rounded-full border border-[#1838a8]" /></BoxIcon></div>
            <div className="w-[20px] h-[1px] bg-[#a0a0a0] my-[3px] shrink-0" />
            <div className={slot}><BoxIcon><svg viewBox="0 0 14 14" className="w-[14px] h-[14px]"><path d="M1 4l3-1 3 1 3-1 3 1" fill="none" stroke="#d00" /><path d="M1 8l3-1 3 1 3-1 3 1" fill="none" stroke="#03c" /></svg></BoxIcon></div>
            <div className={`${slot} text-[11px] font-bold text-[#2040c0]`}>RSI</div>
            <div className={`${slot} text-[17px] font-bold text-[#c02020]`}>S</div>
            <div className={slot}><svg viewBox="0 0 16 16" className="w-[16px] h-[16px]"><path d="M8 0l3 3H9v4h4V5l3 3-3 3V9H9v4h2l-3 3-3-3h2V9H3v2L0 8l3-3v2h4V3H5z" fill="#1040c0" /></svg></div>
            <div className={slot}><svg viewBox="0 0 16 16" className="w-[16px] h-[16px]"><path d="M2 14l1-4 8-8 3 3-8 8z" fill="#f0b040" stroke="#a06010" strokeWidth=".6" /></svg></div>
            <div className="w-[20px] h-[1px] bg-[#a0a0a0] my-[4px] shrink-0" />
            <div className={slot}><BoxIcon>FS</BoxIcon></div>
            <div className={slot}><BoxIcon border="border-[#60a060]"><svg viewBox="0 0 14 14" className="w-[12px] h-[12px]"><path d="M3 7a4 4 0 0 1 7-2l2-1v5H8l2-2a2.5 2.5 0 0 0-5 0zM11 7a4 4 0 0 1-7 2l-2 1V6h4L4 8a2.5 2.5 0 0 0 5 0z" fill="#30a030" /></svg></BoxIcon></div>
            <div className="text-[12px] h-[22px] w-full text-center pr-[5px] leading-[22px]">1</div>
            <div className="text-[12px] h-[22px] w-full text-center pr-[5px] leading-[22px]">5</div>
            <div className="text-[12px] h-[22px] w-full text-center pr-[5px] leading-[22px]">15</div>
            <div className="text-[12px] h-[22px] w-full text-center pr-[5px] leading-[22px]">30</div>
            <div className="text-[12px] h-[22px] w-full text-center pr-[5px] leading-[22px]">60</div>
            <div className="h-[1px] shrink-0" />
            <div className="h-[22px] w-[22px] border-l border-t border-[#a0a0a0] bg-[#f8f8f8] text-[12px] flex items-center justify-center shrink-0">日</div>
            {['周', '月', 'N', '多', '季', '年'].map((t) => (
                <div key={t} className="h-[22px] text-[12px] flex items-center justify-center shrink-0 pr-[2px]">{t}</div>
            ))}
            <div className="absolute left-[13px] top-[510px] w-[8px] h-[65px] rounded-b-[4px] overflow-hidden bg-[#40486a]">
                <div className="mt-[37px] h-[28px] bg-gradient-to-b from-[#60e070] to-[#40d8e8]" />
            </div>
        </div>
    )
}

function Ticker() {
    return (
        <div className="h-[23px] shrink-0 flex items-center bg-[#2e3238] border-t border-[#b40000] text-[12px] text-[#e0e0e0] whitespace-nowrap">
            {tickers.map(([t, w]) => (
                <div key={t} className={`${w} shrink-0 pl-[1px] overflow-hidden`}>{t}</div>
            ))}
        </div>
    )
}

function IndexBoxes() {
    return (
        <div className="flex flex-col gap-[2px]">
            <div className="w-[50px] h-[8px] flex border border-white">
                <div className="flex-1" /><div className="flex-1 bg-[#e00000]" /><div className="flex-1 bg-[#008000]" /><div className="flex-1" />
            </div>
            <div className="w-[50px] h-[5px] bg-[repeating-linear-gradient(90deg,#006a00_0,#006a00_5px,transparent_5px,transparent_7px)]" />
        </div>
    )
}

function StatusBar() {
    return (
        <div className={`h-[22px] shrink-0 flex items-center bg-[#252b36] text-[12px] whitespace-nowrap ${sans}`}>
            <span className="ml-[7px] mr-[7px] w-[12px] h-[12px] rounded-full bg-[#606878] text-[8px] flex items-center justify-center text-[#ccc] leading-none">∨</span>
            {indexCells.map(([t, c, w], i) => (
                <span key={i} className={`${w} ${c} shrink-0`}>{t}</span>
            ))}
            <div className="flex gap-[2px]"><IndexBoxes /><IndexBoxes /></div>
            <div className="ml-[10px] w-[14px] h-[14px] rounded-full border-[3px] border-[#606878]" />
            <div className="ml-[6px] w-[14px] h-[15px] bg-[#606878] rounded-[2px] text-[12px] text-[#252b36] font-bold flex items-center justify-center">2</div>
            <span className="ml-[3px] text-[13px] text-[#d8dce4]">已连接</span>
            <div className="ml-auto mr-[4px] flex items-center gap-[16px]">
                <svg viewBox="0 0 18 12" className="w-[17px] h-[12px]"><rect width="18" height="12" rx="2" fill="#6a7080" /><path d="M3 4h2M7 4h2M11 4h2M5 8h8" stroke="#252b36" strokeWidth="1.6" /></svg>
                <svg viewBox="0 0 14 16" className="w-[13px] h-[15px]"><path d="M1 3h5v10H1zM8 1h5v10H8z" fill="#6a7080" /><path d="M3.5 1v14M10.5 0v14" stroke="#6a7080" /></svg>
                <svg viewBox="0 0 16 16" className="w-[15px] h-[15px]"><circle cx="8" cy="8" r="6" fill="none" stroke="#6a7080" strokeWidth="1.6" strokeDasharray="5 2.5" /><circle cx="8" cy="8" r="1.5" fill="#6a7080" /></svg>
                <svg viewBox="0 0 14 16" className="w-[13px] h-[15px]"><path d="M1 1h3v2h2V1h2v2h2V1h3v5h-2v6h2v3H1v-3h2V6H1z" fill="#f0f0f0" /></svg>
                <span className={`text-[12.5px] text-[#c8ccd4] ${sans}`}>13:32:42</span>
            </div>
        </div>
    )
}

export default function App() {
    return (
        <div className={`w-[1920px] h-[1040px] flex flex-col bg-black overflow-hidden ${sans}`}>
            <TopBar />
            <div className="flex-1 flex min-h-0">
                <div className="w-[1895px] shrink-0 flex flex-col">
                    <div className="h-[965px] shrink-0 flex">
                        <LeftColumn />
                        <RightPanel />
                    </div>
                    <Ticker />
                    <StatusBar />
                </div>
                <SideStrip />
            </div>
        </div>
    )
}
